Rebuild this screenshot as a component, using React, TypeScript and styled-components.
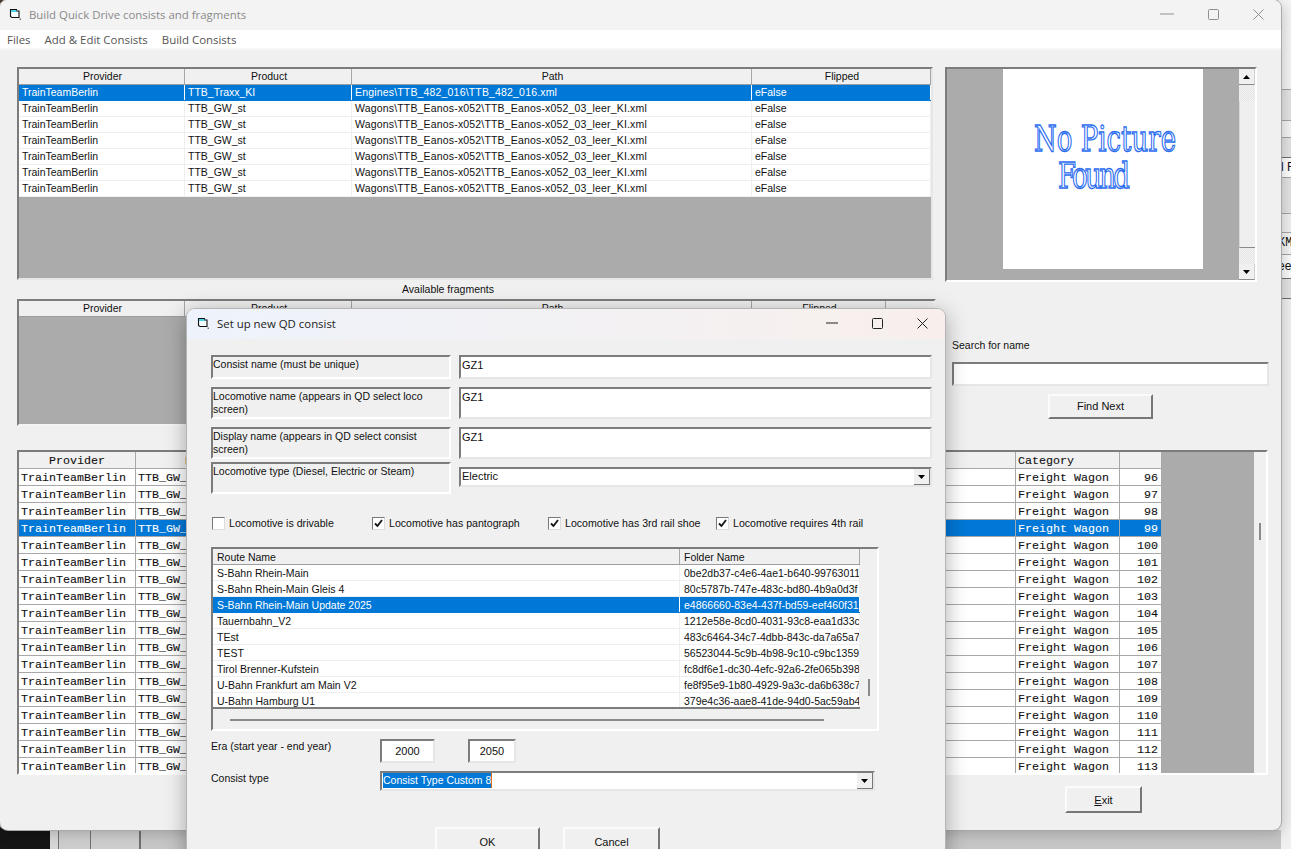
import React from "react";
import styled, { createGlobalStyle, css } from "styled-components";

const Global = createGlobalStyle`
  html, body { margin: 0; padding: 0; background: #f1f1f1; }
  #root { width: 1291px; height: 849px; overflow: hidden; }
  * { box-sizing: border-box; }
`;

const sunken = css`
  border-style: solid;
  border-width: 2px;
  border-color: #7c7c7c #e6e6e6 #e6e6e6 #7c7c7c;
`;

const raised = css`
  border-style: solid;
  border-width: 2px;
  border-color: #fbfbfb #767676 #767676 #fbfbfb;
`;

const Desktop = styled.div`
  position: relative;
  width: 1291px;
  height: 849px;
  overflow: hidden;
  display: grid;
  grid-template-columns: 1281px 10px;
  grid-template-rows: 830px 19px;
  font-family: "Liberation Sans", Arial, sans-serif;
  font-size: 10.5px;
  color: #111;
  background: linear-gradient(#151515, #151515) 0 820px / 10px 10px no-repeat,
    linear-gradient(#4a3a2a, #4a3a2a) 0 0 / 3px 3px no-repeat, #f1f1f1;
`;

const Win = styled.div`
  grid-column: 1;
  grid-row: 1;
  display: flex;
  flex-direction: column;
  background: #f0f0f0;
  border-radius: 8px;
  overflow: hidden;
  box-shadow: 0 0 0 1px #a9a9a9, 2px 3px 14px rgba(0, 0, 0, 0.2);
  z-index: 1;
`;

const TitleBar = styled.div<{ $bg?: string }>`
  height: 30px;
  flex: none;
  display: flex;
  align-items: center;
  padding: 0 0 2px 9px;
  background: ${(p) => p.$bg || "#f3f3f3"};
`;

const TitleText = styled.div<{ $color: string }>`
  margin-left: 7px;
  font-family: "Open Sans", sans-serif;
  font-size: 11.4px;
  color: ${(p) => p.$color};
  flex: 1;
`;

const Controls = styled.div<{ $w: number }>`
  display: flex;
  width: ${(p) => p.$w}px;
  margin-right: 17px;
  flex: none;
  justify-content: space-between;
  align-items: center;
`;

const MenuBar = styled.div`
  height: 18px;
  flex: none;
  background: #fff;
  display: flex;
  align-items: center;
  gap: 14px;
  padding-left: 7px;
  font-family: "Open Sans", sans-serif;
  font-size: 11.45px;
  color: #555;
`;

const MenuRule = styled.div`
  height: 2px;
  flex: none;
  background: #f8f8f8;
`;

const Body = styled.div`
  flex: 1;
  padding: 17px 0 0 17px;
  display: flex;
  flex-direction: column;
  align-items: flex-start;
`;

const TopRow = styled.div`
  display: flex;
  gap: 12px;
  align-items: flex-start;
  height: 214px;
`;

const Frame = styled.div<{ $w: number; $h: number; $bg?: string }>`
  ${sunken}
  width: ${(p) => p.$w}px;
  height: ${(p) => p.$h}px;
  background: ${(p) => p.$bg || "#ababab"};
  overflow: hidden;
  flex: none;
`;

const SansRow = styled.div<{ $cols: string; $sel?: boolean }>`
  display: grid;
  grid-template-columns: ${(p) => p.$cols};
  height: 16px;
  line-height: 15px;
  background: ${(p) => (p.$sel ? "#0078d7" : "#fff")};
  color: ${(p) => (p.$sel ? "#fff" : "#111")};
  border-bottom: 1px solid ${(p) => (p.$sel ? "#0078d7" : "#efefef")};
  white-space: nowrap;
`;

const SansCell = styled.div<{ $sel?: boolean; $wide?: boolean }>`
  padding-left: 3px;
  overflow: hidden;
  letter-spacing: ${(p) => (p.$wide ? "0.17px" : "0")};
  border-right: 1px solid ${(p) => (p.$sel ? "#fff" : "#efefef")};
`;

const SansHead = styled.div<{ $cols: string }>`
  display: grid;
  grid-template-columns: ${(p) => p.$cols};
  height: 16px;
  line-height: 15px;
  background: #f0f0f0;
  border-bottom: 1px solid #9d9d9d;
  white-space: nowrap;
`;

const HeadCell = styled.div<{ $left?: boolean }>`
  text-align: ${(p) => (p.$left ? "left" : "center")};
  padding-left: ${(p) => (p.$left ? "4px" : "2px")};
  border-right: 1px solid #a6a6a6;
  overflow: hidden;
`;

const PicFrame = styled.div`
  ${sunken}
  width: 312px;
  height: 215px;
  background: #ababab;
  display: grid;
  grid-template-columns: 1fr 16px;
  border-right-color: #fff;
  border-bottom-color: #fff;
`;

const PicArea = styled.div`
  display: flex;
  justify-content: flex-start;
  padding-left: 56px;
`;

const Pic = styled.div`
  width: 200px;
  height: 200px;
  background: #fff;
  padding-top: 59px;
  display: flex;
  flex-direction: column;
  align-items: flex-start;
`;

const PicLine = styled.div<{ $ml: number; $ls: number }>`
  font-family: "DejaVu Serif", "Liberation Serif", serif;
  font-size: 26px;
  line-height: 26px;
  height: 37px;
  margin-left: ${(p) => p.$ml}px;
  letter-spacing: ${(p) => p.$ls}px;
  color: #fff;
  -webkit-text-stroke: 1px #2a6cf0;
  transform: scaleY(1.37);
  transform-origin: 50% 50%;
  white-space: pre;
`;

const VScroll = styled.div`
  display: flex;
  flex-direction: column;
  background: #f0f0f0;
`;

const ArrowBtn = styled.div`
  height: 16px;
  flex: none;
  background: #f0f0f0;
  border-bottom: 1px solid #8a8a8a;
  border-right: 1px solid #d0d0d0;
  display: flex;
  align-items: center;
  justify-content: center;
`;

const Hatch = styled.div`
  height: 16px;
  flex: none;
  background: repeating-conic-gradient(#f4f4f4 0 25%, #e4e4e4 0 50%) 0 0 / 2px 2px;
`;

const Thumb = styled.div`
  flex: 1;
  background: #efefef;
  border-bottom: 1px solid #8a8a8a;
  border-left: 1px solid #d8d8d8;
`;

const CenterLabel = styled.div`
  width: 862px;
  text-align: center;
  height: 18px;
  line-height: 16px;
`;

const MidRow = styled.div`
  display: flex;
  gap: 16px;
  height: 127px;
`;

const MidFrame = styled(Frame)`
  border-right-color: #f4f4f4;
  border-bottom-color: #f4f4f4;
`;

const SearchCol = styled.div`
  width: 317px;
  display: flex;
  flex-direction: column;
  padding-top: 40px;
`;

const SearchLabel = styled.div`
  height: 23px;
  line-height: 12px;
`;

const Input = styled.div<{ $w?: number; $h?: number; $center?: boolean; $pt?: number }>`
  ${sunken}
  width: ${(p) => (p.$w ? `${p.$w}px` : "100%")};
  height: ${(p) => p.$h || 24}px;
  background: #fff;
  flex: none;
  padding: ${(p) => p.$pt ?? 2}px 0 0 ${(p) => (p.$center ? 0 : 1)}px;
  text-align: ${(p) => (p.$center ? "center" : "left")};
  font-size: 11px;
  line-height: 13px;
`;

const Button = styled.div<{ $w: number; $h: number }>`
  ${raised}
  width: ${(p) => p.$w}px;
  height: ${(p) => p.$h}px;
  flex: none;
  background: #f0f0f0;
  display: flex;
  align-items: center;
  justify-content: center;
  font-size: 11px;
`;

const FindBtn = styled(Button)`
  margin: 8px 0 0 96px;
  padding-bottom: 2px;
`;

const BigFrame = styled(Frame)`
  margin-top: 24px;
  background: #f0f0f0;
  border-right-color: #fff;
  border-bottom-color: #fff;
  display: grid;
  grid-template-columns: 1143px 92px 1fr;
`;

const MonoTable = styled.div`
  font-family: "Liberation Mono", monospace;
  font-size: 11.67px;
  -webkit-text-stroke: 0.1px currentColor;
  background: #fff;
  overflow: hidden;
`;

const BigGray = styled.div`
  background: #ababab;
`;

const BigScroll = styled.div`
  background: #f0f0f0;
  padding: 71px 0 0 5px;
`;

const ThumbMark = styled.div`
  width: 2px;
  height: 17px;
  background: #8a8a8a;
`;

const MonoRow = styled.div<{ $sel?: boolean; $head?: boolean }>`
  display: grid;
  grid-template-columns: 117px 880px 104px 42px;
  height: 17px;
  line-height: 18px;
  white-space: nowrap;
  background: ${(p) => (p.$sel ? "#0078d7" : p.$head ? "#f0f0f0" : "#fff")};
  color: ${(p) => (p.$sel ? "#fff" : "#111")};
  border-bottom: 1px solid #a8a8a8;
`;

const MonoCell = styled.div<{ $right?: boolean; $center?: boolean; $pl?: number }>`
  padding: 0 ${(p) => (p.$right ? 3 : 0)}px 0 ${(p) => (p.$right || p.$center ? 0 : p.$pl ?? 2)}px;
  text-align: ${(p) => (p.$right ? "right" : p.$center ? "center" : "left")};
  border-right: 1px solid #a8a8a8;
  overflow: hidden;
`;

const ExitBtn = styled(Button)`
  margin: 11px 0 0 1048px;
`;

const RightStrip = styled.div`
  grid-column: 2;
  grid-row: 1 / 3;
  background: #f4f4f4;
  padding-top: 89px;
  display: flex;
  flex-direction: column;
`;

const StripRow = styled.div<{ $h: number; $bg?: string; $dark?: boolean; $indent?: number; $mono?: boolean }>`
  height: ${(p) => p.$h}px;
  flex: none;
  background: ${(p) => p.$bg || "#e4e4e4"};
  border-top: 1px solid ${(p) => (p.$dark ? "#6e6e6e" : "#a5a5a5")};
  font-family: ${(p) => (p.$mono ? '"Liberation Mono", monospace' : "inherit")};
  font-size: 12px;
  line-height: ${(p) => p.$h - 2}px;
  text-indent: ${(p) => p.$indent || 0}px;
  white-space: nowrap;
  overflow: hidden;
`;

const BottomStrip = styled.div`
  grid-column: 1;
  grid-row: 2;
  display: grid;
  grid-template-columns: 50px 8px 1px 31px 1px 48px 2px 1fr;
  background: #d0d0d0;
`;

const Black = styled.div`
  background: #151515;
`;

const StripCell = styled.div<{ $line?: boolean; $bg?: string }>`
  background: ${(p) => (p.$line ? "#6f6f6f" : p.$bg || "#cdcdcd")};
`;

const Dialog = styled.div`
  position: absolute;
  left: 187px;
  top: 309px;
  width: 758px;
  height: 560px;
  background: #f0f0f0;
  border-radius: 8px 8px 0 0;
  box-shadow: 0 0 0 1px #b5b5b5, 0 4px 22px rgba(0, 0, 0, 0.35);
  z-index: 2;
  display: flex;
  flex-direction: column;
`;

const DialogBar = styled(TitleBar)`
  border-radius: 8px 8px 0 0;
  padding-left: 10px;
  background: linear-gradient(90deg, #eef3fb, #f3f1f3 55%, #f8efec);
`;

const DialogBody = styled.div`
  padding: 16px 0 0 24px;
  display: flex;
  flex-direction: column;
  align-items: flex-start;
`;

const FormRow = styled.div<{ $mt: number }>`
  display: grid;
  grid-template-columns: 240px 473px;
  column-gap: 8px;
  margin-top: ${(p) => p.$mt}px;
  align-items: start;
`;

const FieldLabel = styled.div<{ $h: number }>`
  ${sunken}
  height: ${(p) => p.$h}px;
  line-height: 13px;
  font-size: 10.5px;
  border-right-color: #fff;
  border-bottom-color: #fff;
  padding-top: 1px;
`;

const ComboWrap = styled.div<{ $w?: number; $mt?: number; $small?: boolean }>`
  ${sunken}
  width: ${(p) => (p.$w ? `${p.$w}px` : "100%")};
  height: 20px;
  margin-top: ${(p) => p.$mt || 0}px;
  background: #fff;
  display: flex;
  justify-content: space-between;
  align-items: stretch;
  font-size: ${(p) => (p.$small ? 10.5 : 11)}px;
  line-height: 14px;
  padding-left: 1px;
`;

const SelText = styled.span`
  background: #0078d7;
  color: #fff;
  border-right: 1px solid #e07020;
  height: 15px;
`;

const ComboBtn = styled.div`
  width: 16px;
  background: #f0f0f0;
  border-right: 1px solid #777;
  border-bottom: 1px solid #777;
  display: flex;
  align-items: center;
  justify-content: center;
`;

const CheckRow = styled.div`
  display: flex;
  height: 14px;
  margin: 22px 0 0 1px;
  align-items: center;
`;

const CheckItem = styled.div<{ $w?: number }>`
  display: flex;
  align-items: center;
  gap: 4px;
  width: ${(p) => (p.$w ? `${p.$w}px` : "auto")};
  font-size: 10.6px;
  white-space: nowrap;
`;

const CheckBox = styled.div`
  width: 13px;
  height: 13px;
  background: #fff;
  border: 1px solid;
  border-color: #777 #ddd #ddd #777;
  display: flex;
  align-items: center;
  justify-content: center;
`;

const ListFrame = styled.div`
  ${sunken}
  margin-top: 17px;
  width: 668px;
  height: 184px;
  border-right-color: #fff;
  border-bottom-color: #fff;
  display: grid;
  grid-template-columns: 647px 1fr;
  grid-template-rows: 160px 1fr;
  background: #f0f0f0;
`;

const ListTable = styled.div`
  background: #fff;
  overflow: hidden;
  border-bottom: 2px solid #7c7c7c;
  & > div {
    line-height: 16px;
  }
  & > div > div {
    padding-left: 4px;
  }
`;

const ListVScroll = styled.div`
  padding: 130px 0 0 8px;
`;

const ListThumb = styled.div`
  width: 2px;
  height: 17px;
  background: #8a8a8a;
`;

const ListHScroll = styled.div`
  grid-column: 1 / 3;
  padding: 10px 0 0 17px;
`;

const HThumb = styled.div`
  width: 594px;
  height: 2px;
  background: #8a8a8a;
`;

const EraRow = styled.div`
  display: grid;
  grid-template-columns: 169px 55px 33px 48px;
  margin-top: 8px;
  align-items: start;
`;

const PlainLabel = styled.div`
  padding-top: 1px;
  line-height: 13px;
`;

const Gap = styled.div``;

const TypeRow = styled.div`
  display: grid;
  grid-template-columns: 169px 495px;
  margin-top: 8px;
  align-items: start;
`;

const ButtonRow = styled.div`
  display: flex;
  gap: 23px;
  margin: 36px 0 0 224px;
`;

const AppIcon = () => (
  <svg width="13" height="13" viewBox="0 0 13 13" fill="none">
    <path d="M1.5 1.5h6v1.5h2.5v6.5H3L1.5 8.5z" fill="#f4fbfd" stroke="#111" strokeWidth="1.1" />
    <rect x="2" y="2.2" width="5.6" height="1.6" fill="#22c7e0" />
    <path d="M10.5 10.5h1.5v1.5h-1.5z" fill="#777" />
  </svg>
);

const Min = ({ c, w }: { c: string; w: number }) => (
  <svg width={w} height="12" viewBox={`0 0 ${w} 12`}><path d={`M0 6h${w}`} stroke={c} strokeWidth="1" /></svg>
);
const Max = ({ c }: { c: string }) => (
  <svg width="11" height="11" viewBox="0 0 11 11"><rect x="0.5" y="0.5" width="10" height="10" rx="1" fill="none" stroke={c} /></svg>
);
const Close = ({ c }: { c: string }) => (
  <svg width="11" height="11" viewBox="0 0 11 11"><path d="M.5.5l10 10M10.5.5l-10 10" stroke={c} /></svg>
);

const Up = () => (
  <svg width="7" height="4" viewBox="0 0 7 4"><path d="M3.5 0L7 4H0z" fill="#000" /></svg>
);
const Down = () => (
  <svg width="7" height="4" viewBox="0 0 7 4"><path d="M0 0h7L3.5 4z" fill="#000" /></svg>
);
const Tick = () => (
  <svg width="9" height="9" viewBox="0 0 9 9"><path d="M1 4.5l2.5 2.5L8 1" fill="none" stroke="#111" strokeWidth="1.8" /></svg>
);

const topCols = "166px 167px 400px 1fr";
const midCols = "166px 167px 400px 134px";
const topRows = Array.from({ length: 7 }, (_, i) => ({
  product: i === 0 ? "TTB_Traxx_KI" : "TTB_GW_st",
  path: i === 0 ? "Engines\\TTB_482_016\\TTB_482_016.xml" : "Wagons\\TTB_Eanos-x052\\TTB_Eanos-x052_03_leer_KI.xml",
}));
const numbers = Array.from({ length: 18 }, (_, i) => 96 + i);
const routes = [
  ["S-Bahn Rhein-Main", "0be2db37-c4e6-4ae1-b640-99763011"],
  ["S-Bahn Rhein-Main Gleis 4", "80c5787b-747e-483c-bd80-4b9a0d3f"],
  ["S-Bahn Rhein-Main Update 2025", "e4866660-83e4-437f-bd59-eef460f31"],
  ["Tauernbahn_V2", "1212e58e-8cd0-4031-93c8-eaa1d33c"],
  ["TEst", "483c6464-34c7-4dbb-843c-da7a65a7"],
  ["TEST", "56523044-5c9b-4b98-9c10-c9bc1359"],
  ["Tirol Brenner-Kufstein", "fc8df6e1-dc30-4efc-92a6-2fe065b398"],
  ["U-Bahn Frankfurt am Main V2", "fe8f95e9-1b80-4929-9a3c-da6b638c7"],
  ["U-Bahn Hamburg U1", "379e4c36-aae8-41de-94d0-5ac59ab4"],
];
const listCols = "467px 1fr";

export default function App() {
  return (
    <Desktop>
      <Global />
      <Win>
        <TitleBar>
          <AppIcon />
          <TitleText $color="#8a8a8a">Build Quick Drive consists and fragments</TitleText>
          <Controls $w={104}>
            <Min c="#8f8f8f" w={14} />
            <Max c="#8f8f8f" />
            <Close c="#8f8f8f" />
          </Controls>
        </TitleBar>
        <MenuBar>
          <span>Files</span>
          <span>Add &amp; Edit Consists</span>
          <span>Build Consists</span>
        </MenuBar>
        <MenuRule />
        <Body>
          <TopRow>
            <Frame $w={916} $h={213}>
              <SansHead $cols={topCols}>
                <HeadCell>Provider</HeadCell>
                <HeadCell>Product</HeadCell>
                <HeadCell>Path</HeadCell>
                <HeadCell>Flipped</HeadCell>
              </SansHead>
              {topRows.map((r, i) => (
                <SansRow key={i} $cols={topCols} $sel={i === 0}>
                  <SansCell $sel={i === 0}>TrainTeamBerlin</SansCell>
                  <SansCell $sel={i === 0}>{r.product}</SansCell>
                  <SansCell $sel={i === 0} $wide>{r.path}</SansCell>
                  <SansCell $sel={i === 0}>eFalse</SansCell>
                </SansRow>
              ))}
            </Frame>
            <PicFrame>
              <PicArea>
                <Pic>
                  <PicLine $ml={31} $ls={0}>No Picture</PicLine>
                  <PicLine $ml={55} $ls={-2.6}>Found</PicLine>
                </Pic>
              </PicArea>
              <VScroll>
                <ArrowBtn><Up /></ArrowBtn>
                <Hatch />
                <Thumb />
                <Hatch />
                <ArrowBtn><Down /></ArrowBtn>
              </VScroll>
            </PicFrame>
          </TopRow>
          <CenterLabel>Available fragments</CenterLabel>
          <MidRow>
            <MidFrame $w={919} $h={127}>
              <SansHead $cols={midCols}>
                <HeadCell>Provider</HeadCell>
                <HeadCell>Product</HeadCell>
                <HeadCell>Path</HeadCell>
                <HeadCell>Flipped</HeadCell>
              </SansHead>
            </MidFrame>
            <SearchCol>
              <SearchLabel>Search for name</SearchLabel>
              <Input />
              <FindBtn $w={105} $h={25}>Find Next</FindBtn>
            </SearchCol>
          </MidRow>
          <BigFrame $w={1251} $h={325}>
            <MonoTable>
              <MonoRow $head>
                <MonoCell $center>Provider</MonoCell>
                <MonoCell $pl={49}>Product</MonoCell>
                <MonoCell>Category</MonoCell>
                <MonoCell />
              </MonoRow>
              {numbers.map((n) => (
                <MonoRow key={n} $sel={n === 99}>
                  <MonoCell>TrainTeamBerlin</MonoCell>
                  <MonoCell>TTB_GW_st</MonoCell>
                  <MonoCell>Freight Wagon</MonoCell>
                  <MonoCell $right>{n}</MonoCell>
                </MonoRow>
              ))}
            </MonoTable>
            <BigGray />
            <BigScroll><ThumbMark /></BigScroll>
          </BigFrame>
          <ExitBtn $w={77} $h={27}><span><u>E</u>xit</span></ExitBtn>
        </Body>
      </Win>
      <RightStrip>
        <StripRow $h={31} />
        <StripRow $h={17} $bg="#f4f4f4" />
        <StripRow $h={20} />
        <StripRow $h={20} $bg="#fff" $dark>l F</StripRow>
        <StripRow $h={36} />
        <StripRow $h={19} $bg="#f0f0f0" />
        <StripRow $h={22} $bg="#f4f4f4" $indent={-3} $mono>KM</StripRow>
        <StripRow $h={24} $bg="#fafafa" $indent={-3}>ee</StripRow>
        <StripRow $h={20} $dark />
        <StripRow $h={560} $bg="#f0f0f0" $dark />
      </RightStrip>
      <BottomStrip>
        <Black />
        <StripCell $bg="#d6d6d6" />
        <StripCell $line />
        <StripCell />
        <StripCell $line />
        <StripCell />
        <StripCell $line />
        <StripCell $bg="#c6c6c6" />
      </BottomStrip>
      <Dialog>
        <DialogBar>
          <AppIcon />
          <TitleText $color="#222">Set up new QD consist</TitleText>
          <Controls $w={102}>
            <Min c="#222" w={12} />
            <Max c="#222" />
            <Close c="#222" />
          </Controls>
        </DialogBar>
        <DialogBody>
          <FormRow $mt={0}>
            <FieldLabel $h={24}>Consist name (must be unique)</FieldLabel>
            <Input $h={24}>GZ1</Input>
          </FormRow>
          <FormRow $mt={8}>
            <FieldLabel $h={32}>Locomotive name (appears in QD select loco screen)</FieldLabel>
            <Input $h={32}>GZ1</Input>
          </FormRow>
          <FormRow $mt={8}>
            <FieldLabel $h={32}>Display name (appears in QD select consist screen)</FieldLabel>
            <Input $h={32}>GZ1</Input>
          </FormRow>
          <FormRow $mt={3}>
            <FieldLabel $h={32}>Locomotive type (Diesel, Electric or Steam)</FieldLabel>
            <ComboWrap $mt={5}>
              <span>Electric</span>
              <ComboBtn><Down /></ComboBtn>
            </ComboWrap>
          </FormRow>
          <CheckRow>
            <CheckItem $w={160}><CheckBox />Locomotive is drivable</CheckItem>
            <CheckItem $w={176}><CheckBox><Tick /></CheckBox>Locomotive has pantograph</CheckItem>
            <CheckItem $w={168}><CheckBox><Tick /></CheckBox>Locomotive has 3rd rail shoe</CheckItem>
            <CheckItem><CheckBox><Tick /></CheckBox>Locomotive requires 4th rail</CheckItem>
          </CheckRow>
          <ListFrame>
            <ListTable>
              <SansHead $cols={listCols}>
                <HeadCell $left>Route Name</HeadCell>
                <HeadCell $left>Folder Name</HeadCell>
              </SansHead>
              {routes.map((r, i) => (
                <SansRow key={r[1]} $cols={listCols} $sel={i === 2}>
                  <SansCell $sel={i === 2}>{r[0]}</SansCell>
                  <SansCell $sel={i === 2}>{r[1]}</SansCell>
                </SansRow>
              ))}
            </ListTable>
            <ListVScroll><ListThumb /></ListVScroll>
            <ListHScroll><HThumb /></ListHScroll>
          </ListFrame>
          <EraRow>
            <PlainLabel>Era (start year - end year)</PlainLabel>
            <Input $w={55} $center $pt={4}>2000</Input>
            <Gap />
            <Input $w={48} $center $pt={4}>2050</Input>
          </EraRow>
          <TypeRow>
            <PlainLabel>Consist type</PlainLabel>
            <ComboWrap $small>
              <SelText>Consist Type Custom 8</SelText>
              <ComboBtn><Down /></ComboBtn>
            </ComboWrap>
          </TypeRow>
          <ButtonRow>
            <Button $w={105} $h={30}>OK</Button>
            <Button $w={97} $h={30}>Cancel</Button>
          </ButtonRow>
        </DialogBody>
      </Dialog>
    </Desktop>
  );
}
